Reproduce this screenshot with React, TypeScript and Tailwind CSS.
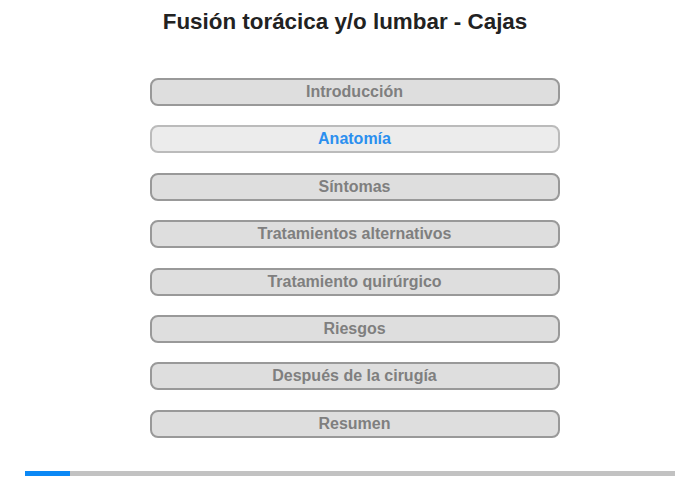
const sections = [
  "Introducción",
  "Anatomía",
  "Síntomas",
  "Tratamientos alternativos",
  "Tratamiento quirúrgico",
  "Riesgos",
  "Después de la cirugía",
  "Resumen",
];

const active = 1;

const App = () => {
  return (
    <div className="w-[700px] h-[480px] bg-white flex flex-col font-['Liberation_Sans',Arial,sans-serif]">
      <h1 className="text-center text-[22.4px] leading-[26px] font-bold text-[#222] pt-[9px] pr-[10px]">
        Fusión torácica y/o lumbar - Cajas
      </h1>
      <div className="flex flex-col items-center gap-[19.4px] mt-[43px] pl-[9px]">
        {sections.map((s, i) => (
          <button
            key={s}
            className={
              i === active
                ? "w-[410px] h-[28px] rounded-[8px] border-2 border-[#bbbbbb] bg-[#ececec] text-[#2b8fef] text-[16px] font-bold"
                : "w-[410px] h-[28px] rounded-[8px] border-2 border-[#999999] bg-[#dedede] text-[#7f7f7f] text-[16px] font-bold"
            }
          >
            {s}
          </button>
        ))}
      </div>
      <div className="mt-auto mb-[4px] mx-[25px] h-[5px] bg-[#c2c2c2] flex">
        <div className="w-[45px] h-full bg-[#0b88f5]" />
      </div>
    </div>
  );
};

export default App;
